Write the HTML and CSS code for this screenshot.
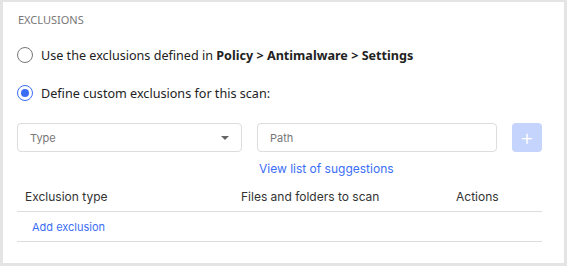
FILE: index.html
```html
<!DOCTYPE html>
<html lang="en">

<head>
	<meta charset="UTF-8">
	<title>Exclusions</title>
	<link rel="stylesheet" href="styles.css">
</head>

<body>
	<div class="card">
		<h4 class="title">Exclusions</h4>

		<label class="radio">
			<span class="dot"></span>
			<span>Use the exclusions defined in <b>Policy &gt; Antimalware &gt; Settings</b></span>
		</label>
		<label class="radio checked">
			<span class="dot"></span>
			<span>Define custom exclusions for this scan:</span>
		</label>

		<!-- new exclusion form -->
		<div class="form">
			<div class="field select">
				<span>Type</span>
				<span class="caret"></span>
			</div>
			<div class="path">
				<div class="field">
					<span>Path</span>
				</div>
				<a class="link" href="#">View list of suggestions</a>
			</div>
			<button class="add" type="button">+</button>
		</div>

		<table class="list">
			<thead>
				<tr>
					<th class="c1">Exclusion type</th>
					<th class="c2">Files and folders to scan</th>
					<th class="c3">Actions</th>
				</tr>
			</thead>
			<tbody>
				<tr>
					<td colspan="3"><a class="link" href="#">Add exclusion</a></td>
				</tr>
			</tbody>
		</table>
	</div>
</body>

</html>
```

FILE: styles.css
```css
body {
	margin: 0;
	padding: 2px 3px 3px 3px;
	background-color: #E4E4E4;
	font-family: "Noto Sans", sans-serif;
	color: #222;
}

.card {
	height: 261px;
	box-sizing: border-box;
	padding: 10px 22px 0 14px;
	background-color: #FFF;
}

.title {
	margin: 0 0 17px 1px;
	font-size: 11px;
	font-weight: normal;
	color: #777;
	text-transform: uppercase;
	line-height: 16px;
}

.radio {
	display: flex;
	align-items: center;
	height: 20px;
	margin-bottom: 18px;
	font-size: 12.6px;
	color: #222;
}

.radio b {
	font-weight: 700;
}

.radio .dot {
	width: 14px;
	height: 14px;
	margin-right: 8px;
	border: 1.5px solid #777;
	border-radius: 50%;
	position: relative;
}

.radio.checked .dot {
	border-color: #3B6EF6;
}

.radio.checked .dot::after {
	content: "";
	position: absolute;
	left: 3px;
	top: 3px;
	width: 8px;
	height: 8px;
	border-radius: 50%;
	background-color: #3B6EF6;
}

.form {
	display: flex;
	gap: 15px;
	padding-top: 2px;
	font-family: "Inter", sans-serif;
}

.field {
	height: 29px;
	box-sizing: border-box;
	padding: 0 12px;
	display: flex;
	align-items: center;
	border: 1px solid #DDD;
	border-radius: 4px;
	font-size: 11px;
	color: #777;
}

.select {
	width: 225px;
	justify-content: space-between;
	padding-right: 12px;
}

.caret {
	width: 0;
	height: 0;
	border-left: 4px solid transparent;
	border-right: 4px solid transparent;
	border-top: 4px solid #666;
}

.path {
	width: 240px;
}

.path .link {
	display: block;
	margin: 9px 0 0 2px;
	font-size: 12px;
}

.link {
	color: #3B6EF6;
	text-decoration: none;
}

.add {
	width: 30px;
	height: 29px;
	border: none;
	border-radius: 4px;
	background-color: #C5D4FC;
	color: #FFF;
	font-size: 22px;
	font-weight: 300;
	line-height: 1;
	padding: 0 0 2px 0;
	font-family: "Inter", sans-serif;
}

.list {
	width: 525px;
	margin-top: 5px;
	border-collapse: collapse;
	font-family: "Inter", sans-serif;
}

.list th {
	height: 30px;
	padding: 0;
	font-size: 12px;
	font-weight: normal;
	text-align: left;
	color: #333;
	border-bottom: 1px solid #DDD;
}

.list .c1 {
	width: 216px;
	padding-left: 8px;
}

.list .c2 {
	width: 215px;
}

.list td {
	height: 29px;
	padding: 0 0 0 15px;
	font-size: 11px;
	border-bottom: 1px solid #DDD;
}
```
